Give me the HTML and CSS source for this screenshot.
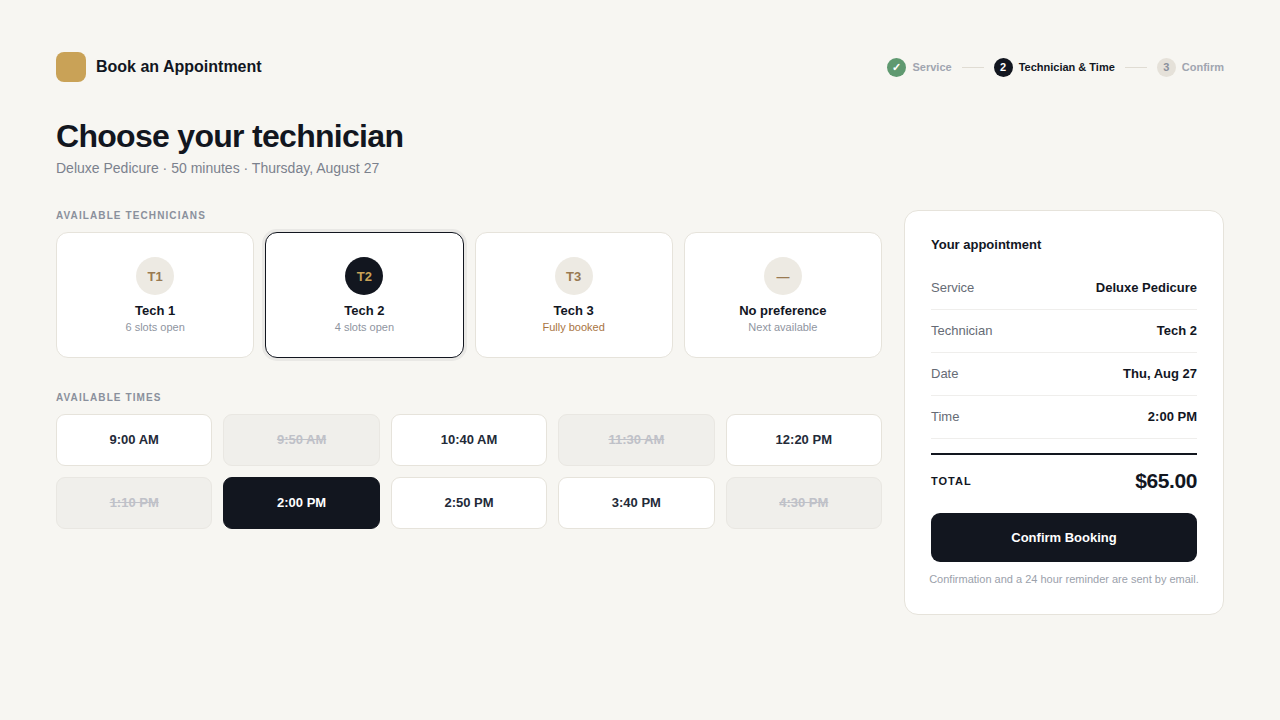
FILE: index.html
```html
<!DOCTYPE html>
<html lang="en">
<head>
    <meta charset="UTF-8">
    <meta name="viewport" content="width=device-width, initial-scale=1.0">
    <title>Book an Appointment</title>
    <link rel="stylesheet" href="styles.css">
</head>
<body>
    <header class="topbar">
        <div class="brand">
            <span class="logo"></span>
            <span class="brand-name">Book an Appointment</span>
        </div>
        <ol class="steps">
            <li class="step done"><span class="dot">✓</span>Service</li>
            <li class="step active" aria-current="step"><span class="dot">2</span>Technician &amp; Time</li>
            <li class="step"><span class="dot">3</span>Confirm</li>
        </ol>
    </header>

    <h1>Choose your technician</h1>
    <p class="subtitle">Deluxe Pedicure · 50 minutes · Thursday, August 27</p>

    <div class="layout">
        <main>
            <section>
                <h2 class="label">Available technicians</h2>
                <div class="techs">
                    <button type="button" class="tech">
                        <span class="avatar">T1</span>
                        <span class="tech-name">Tech 1</span>
                        <span class="tech-note">6 slots open</span>
                    </button>
                    <button type="button" class="tech selected" aria-pressed="true">
                        <span class="avatar">T2</span>
                        <span class="tech-name">Tech 2</span>
                        <span class="tech-note">4 slots open</span>
                    </button>
                    <button type="button" class="tech">
                        <span class="avatar">T3</span>
                        <span class="tech-name">Tech 3</span>
                        <span class="tech-note full">Fully booked</span>
                    </button>
                    <button type="button" class="tech">
                        <span class="avatar">—</span>
                        <span class="tech-name">No preference</span>
                        <span class="tech-note">Next available</span>
                    </button>
                </div>
            </section>

            <section>
                <h2 class="label">Available times</h2>
                <div class="times">
                    <button type="button" class="time">9:00 AM</button>
                    <button type="button" class="time" disabled>9:50 AM</button>
                    <button type="button" class="time">10:40 AM</button>
                    <button type="button" class="time" disabled>11:30 AM</button>
                    <button type="button" class="time">12:20 PM</button>
                    <button type="button" class="time" disabled>1:10 PM</button>
                    <button type="button" class="time selected" aria-pressed="true">2:00 PM</button>
                    <button type="button" class="time">2:50 PM</button>
                    <button type="button" class="time">3:40 PM</button>
                    <button type="button" class="time" disabled>4:30 PM</button>
                </div>
            </section>
        </main>

        <aside class="summary">
            <h2 class="summary-title">Your appointment</h2>
            <dl>
                <div class="row"><dt>Service</dt><dd>Deluxe Pedicure</dd></div>
                <div class="row"><dt>Technician</dt><dd>Tech 2</dd></div>
                <div class="row"><dt>Date</dt><dd>Thu, Aug 27</dd></div>
                <div class="row"><dt>Time</dt><dd>2:00 PM</dd></div>
                <div class="total"><dt>Total</dt><dd>$65.00</dd></div>
            </dl>
            <button type="button" class="confirm">Confirm Booking</button>
            <p class="fineprint">Confirmation and a 24 hour reminder are sent by email.</p>
        </aside>
    </div>
</body>
</html>
```
FILE: styles.css
```css
* {
    box-sizing: border-box;
}
body {
    margin: 0;
    padding: 52px 56px;
    background-color: #f7f6f2;
    color: #12161f;
    font-family: "Liberation Sans", Arial, sans-serif;
}
h1, h2, p, ol, dl, dd {
    margin: 0;
    padding: 0;
}
button {
    font-family: inherit;
    color: inherit;
    cursor: pointer;
}

/* header */
.topbar {
    display: flex;
    justify-content: space-between;
    align-items: center;
    margin-bottom: 36px;
}
.brand {
    display: flex;
    align-items: center;
    gap: 10px;
}
.logo {
    width: 30px;
    height: 30px;
    border-radius: 8px;
    background-color: #c9a257;
}
.brand-name {
    font-size: 16px;
    font-weight: bold;
}
.steps {
    display: flex;
    gap: 10px;
    list-style: none;
}
.step {
    display: flex;
    align-items: center;
    gap: 6px;
    font-size: 11px;
    line-height: 14px;
    font-weight: bold;
    color: #a0a5b0;
}
.step + .step::before {
    content: "";
    width: 22px;
    height: 1px;
    margin-right: 4px;
    background-color: #e0dcd3;
}
.dot {
    display: flex;
    align-items: center;
    justify-content: center;
    width: 19px;
    height: 19px;
    border-radius: 50%;
    background-color: #e5e1d9;
    color: #8a909c;
}
.step.active {
    color: #12161f;
}
.done .dot {
    background-color: #5f9970;
    color: #fff;
}
.active .dot {
    background-color: #12161f;
    color: #fff;
}

h1 {
    font-size: 32px;
    line-height: 36px;
    letter-spacing: -0.022em;
}
.subtitle {
    margin-top: 6px;
    font-size: 14px;
    line-height: 16px;
    color: #7b818d;
}

.layout {
    display: grid;
    grid-template-columns: 1fr 320px;
    align-items: start;
    gap: 22px;
    margin-top: 34px;
}
section + section {
    margin-top: 34px;
}
.label {
    margin-bottom: 11px;
    font-size: 10px;
    line-height: 11px;
    letter-spacing: 0.11em;
    text-transform: uppercase;
    color: #8a909c;
}

/* technicians */
.techs {
    display: grid;
    grid-template-columns: repeat(4, 1fr);
    gap: 11px;
}
.tech {
    display: flex;
    flex-direction: column;
    align-items: center;
    padding: 24px 12px;
    border: 1px solid #e6e3db;
    border-radius: 12px;
    background-color: #fff;
}
.tech.selected {
    border-color: #12161f;
    box-shadow: 0 0 0 3px rgba(18, 22, 31, 0.06);
}
.avatar {
    display: flex;
    align-items: center;
    justify-content: center;
    width: 38px;
    height: 38px;
    margin-bottom: 8px;
    border-radius: 50%;
    background-color: #edeae3;
    color: #997a52;
    font-size: 13px;
    font-weight: bold;
}
.selected .avatar {
    background-color: #12161f;
    color: #c9a257;
}
.tech-name {
    font-size: 13px;
    line-height: 15px;
    font-weight: bold;
}
.tech-note {
    margin-top: 3px;
    font-size: 11px;
    line-height: 12px;
    color: #8f959f;
}
.tech-note.full {
    color: #a8743f;
}

/* time slots */
.times {
    display: grid;
    grid-template-columns: repeat(5, 1fr);
    gap: 11px;
}
.time {
    padding: 17px 6px 18px;
    border: 1px solid #e6e3db;
    border-radius: 9px;
    background-color: #fff;
    color: #232a38;
    font-size: 13px;
    line-height: 15px;
    font-weight: bold;
}
.time:disabled {
    border-color: #e9e7e2;
    background-color: #f0efeb;
    color: #bfc1c8;
    text-decoration: line-through;
    cursor: default;
}
.time.selected {
    border-color: #12161f;
    background-color: #12161f;
    color: #fff;
}

/* summary card */
.summary {
    padding: 26px;
    border: 1px solid #e6e3db;
    border-radius: 14px;
    background-color: #fff;
}
.summary-title {
    margin-bottom: 15px;
    font-size: 13px;
    line-height: 15px;
}
.row, .total {
    display: flex;
    justify-content: space-between;
    align-items: center;
}
.row {
    padding: 13px 0 14px;
    border-bottom: 1px solid #efeeec;
    font-size: 13px;
    line-height: 15px;
}
.row dt {
    color: #666b75;
}
.row dd, .total {
    font-weight: bold;
}
.total {
    margin-top: 14px;
    padding: 14px 0 20px;
    border-top: 2px solid #12161f;
}
.total dt {
    font-size: 11px;
    letter-spacing: 1px;
    text-transform: uppercase;
}
.total dd {
    font-size: 21px;
    line-height: 24px;
    letter-spacing: -0.02em;
}
.confirm {
    display: block;
    width: 100%;
    height: 49px;
    border: none;
    border-radius: 9px;
    background-color: #12161f;
    color: #fff;
    font-size: 13px;
    font-weight: bold;
}
.fineprint {
    margin: 10px -8px 0;
    padding-bottom: 1px;
    font-size: 11px;
    line-height: 15px;
    text-align: center;
    color: #9ba1ab;
}
```
